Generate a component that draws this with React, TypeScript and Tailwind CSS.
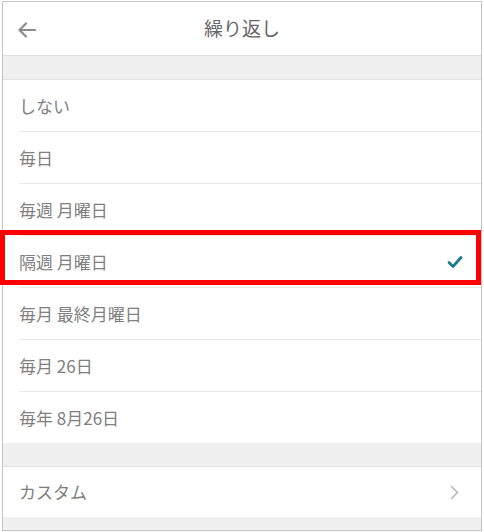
import React from 'react'

const options = [
  'しない',
  '毎日',
  '毎週 月曜日',
  '隔週 月曜日',
  '毎月 最終月曜日',
  '毎月 26日',
  '毎年 8月26日',
]

const font = { fontFamily: '"Noto Sans CJK JP", "Noto Sans", sans-serif' }

export default function App() {
  const selected = 3
  return (
    <div className="relative w-[484px] h-[532px] bg-white px-[2px] pt-[1px]" style={font}>
      <div className="flex flex-col h-[530px] border border-[#c4c4c4] bg-[#f0f0f0] overflow-hidden">
        {/* Header */}
        <div className="relative flex items-center justify-center h-[54px] shrink-0 bg-white border-b border-[#dedede]">
          <svg className="absolute left-[13px] top-[17px]" width="22" height="22" viewBox="0 0 22 22" fill="none">
            <path d="M19 11H3.5M10 4.5L3.5 11l6.5 6.5" stroke="#8a8a8a" strokeWidth="2.2" strokeLinecap="round" strokeLinejoin="round" />
          </svg>
          <span className="text-[19px] text-[#666]">繰り返し</span>
        </div>

        <div className="h-[24px] shrink-0 border-b border-[#e2e2e2]" />

        <div className="bg-white shrink-0">
          {options.map((label, i) => (
            <div key={label} className="pl-[16px]">
              <div
                className={`flex items-center justify-between pr-[18px] ${i < options.length - 1 ? 'h-[52px] border-b border-[#e8e8e8]' : 'h-[51px]'}`}
              >
                <span className="text-[17px] text-[#808080]">{label}</span>
                {i === selected ? (
                  <svg width="16" height="14" viewBox="0 0 16 14" fill="none">
                    <path d="M2 7.5l4 4 8-9" stroke="#217a8c" strokeWidth="2.8" strokeLinecap="round" strokeLinejoin="round" />
                  </svg>
                ) : null}
              </div>
            </div>
          ))}
        </div>

        <div className="h-[24px] shrink-0 border-b border-[#e2e2e2]" />

        <div className="flex items-center justify-between h-[50px] shrink-0 bg-white pl-[16px] pr-[22px]">
          <span className="text-[17px] text-[#808080]">カスタム</span>
          <svg width="9" height="15" viewBox="0 0 9 15" fill="none">
            <path d="M1.5 1.5l6 6-6 6" stroke="#b5b5b5" strokeWidth="1.5" strokeLinecap="round" strokeLinejoin="round" />
          </svg>
        </div>
      </div>

      {/* Highlight annotation */}
      <div className="absolute left-0 top-[230px] w-[481px] h-[55px] border-[5px] border-[#ff0000]" />
    </div>
  )
}
